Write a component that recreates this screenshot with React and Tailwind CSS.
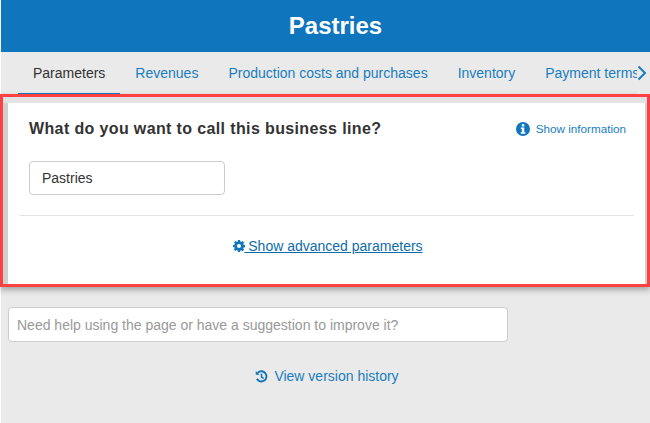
import React from "react";

const Gear = () => (
  <svg viewBox="0 0 16 16" className="w-[12px] h-[12px] inline-block align-[-1px] mr-[-1px]">
    <path fill="#0f75bc" fillRule="evenodd" d="M6.6 0h2.8l.4 2.1c.4.1.8.3 1.2.5l1.8-1.2 2 2-1.2 1.8c.2.4.4.8.5 1.2l2.1.4v2.8l-2.1.4c-.1.4-.3.8-.5 1.2l1.2 1.8-2 2-1.8-1.2c-.4.2-.8.4-1.2.5L9.4 16H6.6l-.4-2.1c-.4-.1-.8-.3-1.2-.5l-1.8 1.2-2-2L2.4 10.800c-.2-.4-.4-.8-.5-1.200L0 9.400V6.600l2.100-.4c.1-.4.3-.8.5-1.200L1.400 3.200l2-2L5.200 2.400c.4-.2.8-.4 1.200-.5L6.600 0zM8 5.300a2.700 2.700 0 1 0 0 5.400 2.700 2.700 0 0 0 0-5.400z" />
  </svg>
);

const Info = () => (
  <svg viewBox="0 0 14 14" className="w-[14px] h-[14px] shrink-0">
    <circle cx="7" cy="7" r="7" fill="#0f75bc" />
    <rect x="5.800" y="2.200" width="2.500" height="2.300" fill="#fff" />
    <path fill="#fff" d="M4.800 5.600h3.500v4.700h1.100v1.400H4.800v-1.400h1v-3.300h-1z" />
  </svg>
);

const History = () => (
  <svg viewBox="0 0 14 14" className="w-[13px] h-[13px] shrink-0" fill="none" stroke="#0f75bc" strokeWidth="2">
    <path d="M2.900 3A5.500 5.500 0 1 1 2 9.500" />
    <path d="M7 4v3.500l2.300 1.500" strokeWidth="1.700" />
    <path d="M0.800 1v4.200H5z" fill="#0f75bc" stroke="none" />
  </svg>
);

const tabs = ["Revenues", "Production costs and purchases", "Inventory", "Payment terms"];

export default function App() {
  return (
    <div className="w-[650px] h-[423px] overflow-hidden bg-white pl-px font-['Liberation_Sans',Arial,sans-serif]">
      <div className="h-full flex flex-col bg-[#eaeaea]">
        <header className="h-[52px] shrink-0 bg-[#0f75bc] flex items-center justify-center pl-5">
          <h1 className="text-2xl font-bold leading-none text-white">Pastries</h1>
        </header>

        <nav className="h-[42px] shrink-0 flex items-stretch pl-[17px] relative overflow-hidden text-sm whitespace-nowrap">
          <span className="px-[15px] flex items-center text-[#333] border-b border-[#0f75bc]">Parameters</span>
          {tabs.map((t) => (
            <span key={t} className="px-[15px] flex items-center text-[#1a7dc0]">{t}</span>
          ))}
          <span className="absolute right-0 top-0 h-full w-[13px] flex items-center bg-[#eaeaea]">
            <svg viewBox="0 0 10 16" className="w-[10px] h-[16px]" fill="none" stroke="#1a7dc0" strokeWidth="2">
              <path d="M1.500 1.500L8 8l-6.500 6.500" />
            </svg>
          </span>
        </nav>

        <section className="-ml-px h-[193px] shrink-0 border-[3px] border-[#fb4141] bg-[#e2e2e2] shadow-[0_3px_6px_rgba(0,0,0,0.3)] pt-[6px] flex flex-col">
          <div className="flex-1 bg-white border-l-[5px] border-r-2 border-[#d0d0d0] px-[11px] flex flex-col">
            <div className="flex justify-between items-start pt-4 pl-[10px] pr-[8px]">
              <h2 className="text-base font-bold text-[#333] leading-5 tracking-[0.37px]">What do you want to call this business line?</h2>
              <a className="flex items-center gap-[6px] text-[11.7px] text-[#1a7dc0] leading-5">
                <Info />
                Show information
              </a>
            </div>
            <div className="pl-[10px] mt-[22px]">
              <div className="w-[196px] h-[34px] bg-white border border-[#ccc] rounded flex items-center px-3 text-sm text-[#333]">Pastries</div>
            </div>
            <div className="mt-5 border-t border-[#e5e5e5]" />
            <div className="mt-5 pl-[3px] text-center text-sm leading-5">
              <a className="text-[#0f6cab] underline"><Gear /> Show advanced parameters</a>
            </div>
          </div>
        </section>

        <div className="pl-[7px] pt-5">
          <div className="w-[500px] h-[35px] bg-white border border-[#ccc] rounded flex items-center px-2 text-sm text-[#999]">
            Need help using the page or have a suggestion to improve it?
          </div>
        </div>

        <div className="mt-6 flex items-center justify-center gap-[6px] text-sm leading-5 text-[#1a7dc0] pl-[3px]">
          <History />
          View version history
        </div>
      </div>
    </div>
  );
}
